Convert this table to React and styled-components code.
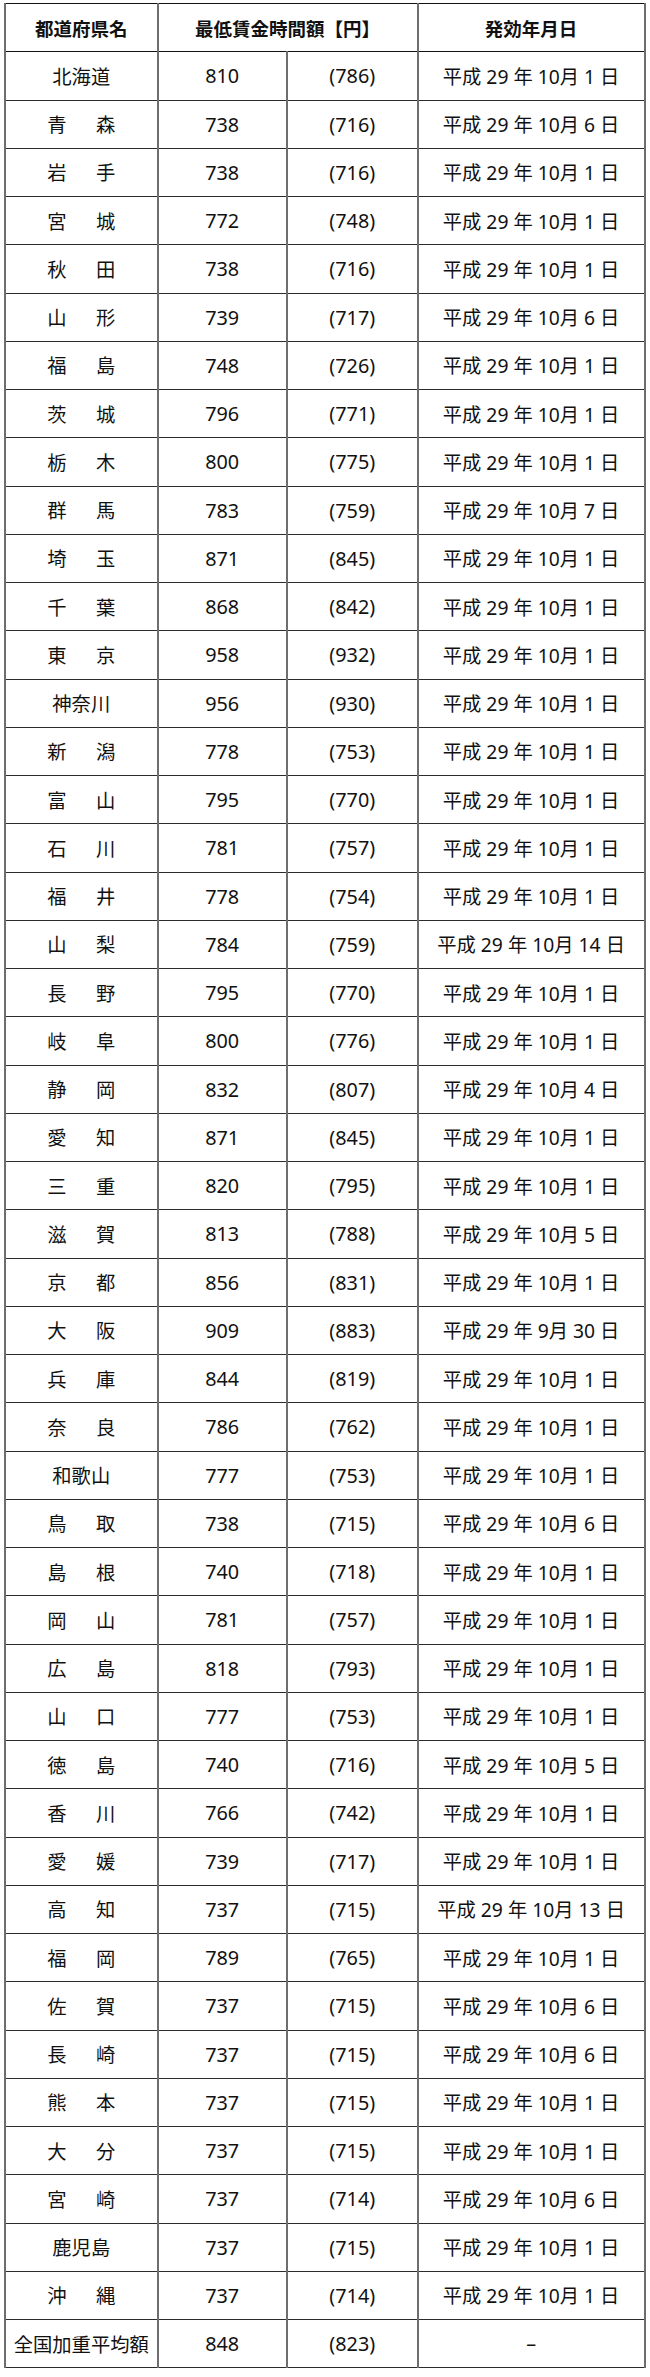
import React from 'react';
import styled, { createGlobalStyle } from 'styled-components';

/* ─── Global ─────────────────────────────────────────────────── */

const GlobalStyle = createGlobalStyle`
  html, body {
    margin: 0;
    padding: 0;
    background: #ffffff;
  }
  body {
    font-family: "Noto Sans", "Noto Sans CJK JP", sans-serif;
    color: #111111;
  }
`;

/* ─── Table ──────────────────────────────────────────────────── */

const Page = styled.div`
  padding: 3px 0 0 4px;
`;

const Table = styled.table`
  border-collapse: collapse;
  table-layout: fixed;
  width: 641px;
  border-top: 1px solid #111111;
  border-bottom: 1px solid #111111;
  border-left: 2px solid #2a2a2a;
  border-right: 2px solid #2a2a2a;
`;

const Row = styled.tr`
  height: 48.26px;
`;

const HeadCell = styled.th`
  padding: 0;
  font-size: 18.5px;
  font-weight: 700;
  text-align: center;
  vertical-align: middle;
  color: #111111;
  border-left: 2px solid #6e6e6e;
  border-right: 2px solid #6e6e6e;
  border-bottom: 1px solid #111111;
`;

const Cell = styled.td`
  padding: 0;
  font-size: ${p => (p.$num ? '19.8px' : '19.3px')};
  text-align: center;
  vertical-align: middle;
  white-space: pre;
  border-left: 2px solid #6e6e6e;
  border-right: 2px solid #6e6e6e;
  border-top: 1px solid #2c2c2c;
  border-bottom: 1px solid #2c2c2c;
`;

const Spread = styled.span`
  display: inline-flex;
  justify-content: space-between;
  width: 68px;
`;

/* ─── Data ───────────────────────────────────────────────────── */

const rows = [
  ['北海道', 810, 786, 10, 1],
  ['青森', 738, 716, 10, 6],
  ['岩手', 738, 716, 10, 1],
  ['宮城', 772, 748, 10, 1],
  ['秋田', 738, 716, 10, 1],
  ['山形', 739, 717, 10, 6],
  ['福島', 748, 726, 10, 1],
  ['茨城', 796, 771, 10, 1],
  ['栃木', 800, 775, 10, 1],
  ['群馬', 783, 759, 10, 7],
  ['埼玉', 871, 845, 10, 1],
  ['千葉', 868, 842, 10, 1],
  ['東京', 958, 932, 10, 1],
  ['神奈川', 956, 930, 10, 1],
  ['新潟', 778, 753, 10, 1],
  ['富山', 795, 770, 10, 1],
  ['石川', 781, 757, 10, 1],
  ['福井', 778, 754, 10, 1],
  ['山梨', 784, 759, 10, 14],
  ['長野', 795, 770, 10, 1],
  ['岐阜', 800, 776, 10, 1],
  ['静岡', 832, 807, 10, 4],
  ['愛知', 871, 845, 10, 1],
  ['三重', 820, 795, 10, 1],
  ['滋賀', 813, 788, 10, 5],
  ['京都', 856, 831, 10, 1],
  ['大阪', 909, 883, 9, 30],
  ['兵庫', 844, 819, 10, 1],
  ['奈良', 786, 762, 10, 1],
  ['和歌山', 777, 753, 10, 1],
  ['鳥取', 738, 715, 10, 6],
  ['島根', 740, 718, 10, 1],
  ['岡山', 781, 757, 10, 1],
  ['広島', 818, 793, 10, 1],
  ['山口', 777, 753, 10, 1],
  ['徳島', 740, 716, 10, 5],
  ['香川', 766, 742, 10, 1],
  ['愛媛', 739, 717, 10, 1],
  ['高知', 737, 715, 10, 13],
  ['福岡', 789, 765, 10, 1],
  ['佐賀', 737, 715, 10, 6],
  ['長崎', 737, 715, 10, 6],
  ['熊本', 737, 715, 10, 1],
  ['大分', 737, 715, 10, 1],
  ['宮崎', 737, 714, 10, 6],
  ['鹿児島', 737, 715, 10, 1],
  ['沖縄', 737, 714, 10, 1],
];

const dateText = (m, d) => `平成 29 年 ${m}月 ${d} 日`;

const Name = ({ children }) =>
  children.length === 2
    ? <Spread><span>{children[0]}</span><span>{children[1]}</span></Spread>
    : children;

/* ─── Component ──────────────────────────────────────────────── */

export default function App() {
  return (
    <Page>
      <GlobalStyle />
      <Table>
        <colgroup>
          <col style={{ width: '152.5px' }} />
          <col style={{ width: '129.3px' }} />
          <col style={{ width: '130.9px' }} />
          <col style={{ width: '226.8px' }} />
        </colgroup>
        <thead>
          <Row>
            <HeadCell>都道府県名</HeadCell>
            <HeadCell colSpan={2}>最低賃金時間額【円】</HeadCell>
            <HeadCell>発効年月日</HeadCell>
          </Row>
        </thead>
        <tbody>
          {rows.map(([name, wage, prev, m, d]) => (
            <Row key={name}>
              <Cell><Name>{name}</Name></Cell>
              <Cell $num>{wage}</Cell>
              <Cell $num>({prev})</Cell>
              <Cell>{dateText(m, d)}</Cell>
            </Row>
          ))}
          <Row>
            <Cell>全国加重平均額</Cell>
            <Cell $num>848</Cell>
            <Cell $num>(823)</Cell>
            <Cell $num>–</Cell>
          </Row>
        </tbody>
      </Table>
    </Page>
  );
}
